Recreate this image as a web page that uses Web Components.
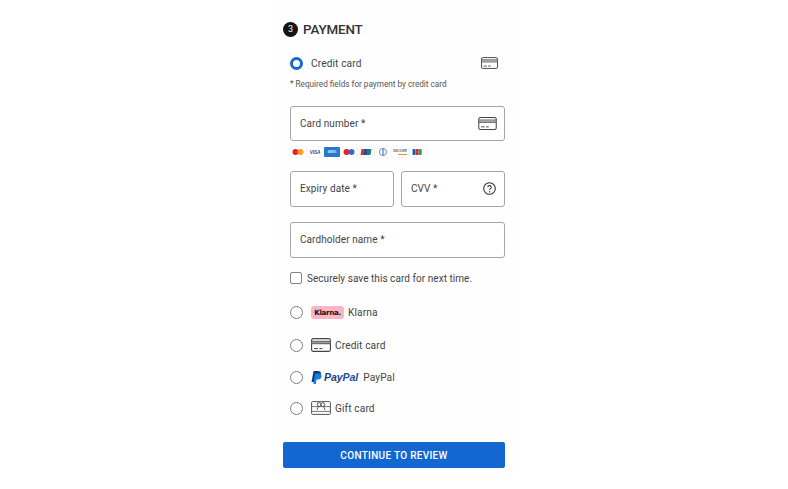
<!DOCTYPE html>
<html>
<head>
<meta charset="utf-8">
<title>Payment</title>
<style>
html, body { margin: 0; background: #fff; }
body { font-family: Roboto, "Liberation Sans", sans-serif; color: #2b2b2b; }
</style>
</head>
<body>
<checkout-payment>
    <pay-option checked style="--row-h:26px;margin-top:0">
        Credit card
        <card-icon slot="end" width="17" height="12"></card-icon>
    </pay-option>
    <p-note>* Required fields for payment by credit card</p-note>
    <text-field label="Card number *" style="margin-top:16px">
        <card-icon slot="end" width="19" height="13"></card-icon>
    </text-field>
    <brand-strip></brand-strip>
    <field-row>
        <text-field label="Expiry date *" tall></text-field>
        <text-field label="CVV *" tall>
            <help-icon slot="end"></help-icon>
        </text-field>
    </field-row>
    <text-field label="Cardholder name *" tall style="margin-top:15px"></text-field>
    <save-check>Securely save this card for next time.</save-check>
    <pay-option style="margin-top:14px;--row-h:28px"><klarna-badge slot="logo"></klarna-badge>Klarna</pay-option>
    <pay-option style="margin-top:5px;--row-h:28px"><card-icon slot="logo" width="20" height="14"></card-icon>Credit card</pay-option>
    <pay-option style="margin-top:4px;--row-h:28px"><paypal-logo slot="logo"></paypal-logo>PayPal</pay-option>
    <pay-option style="margin-top:3px;--row-h:28px"><gift-icon slot="logo"></gift-icon>Gift card</pay-option>
    <primary-button>CONTINUE TO REVIEW</primary-button>
</checkout-payment>

<script>
function shadow(el, html){
    el.attachShadow({ mode: "open" });
    el.shadowRoot.innerHTML = html;
}

class CheckoutPayment extends HTMLElement {
    constructor(){
        super();
        shadow(this, `
<style>
:host {
    display: block;
    box-sizing: border-box;
    width: 244px;
    height: 479px;
    margin: 0 auto;
    padding: 19px 11px 0 11px;
    background: #fefefe;
    border-radius: 4px;
}
.head {
    display: flex;
    align-items: center;
    gap: 5px;
    height: 20px;
    font-size: 13.4px;
    font-weight: 500;
    letter-spacing: -0.15px;
    color: #333;
}
.num {
    width: 15px;
    height: 15px;
    border-radius: 50%;
    background: #141414;
    color: #fff;
    font-size: 9px;
    font-weight: 400;
    display: flex;
    align-items: center;
    justify-content: center;
}
.body {
    padding: 11px 0 0 7px;
    width: 215px;
}
</style>
<div class="head"><span class="num">3</span><span>PAYMENT</span></div>
<div class="body"><slot></slot></div>`);
    }
}

class PayOption extends HTMLElement {
    constructor(){
        super();
        const on = this.hasAttribute("checked");
        shadow(this, `
<style>
:host {
    display: flex;
    align-items: center;
    height: var(--row-h, 28px);
    font-size: 10.2px;
    letter-spacing: 0.1px;
    color: #444;
}
.radio {
    box-sizing: border-box;
    width: 13px;
    height: 13px;
    border-radius: 50%;
    border: ${on ? "3.5px solid #1268d0" : "1px solid #7d7d7d"};
    background: #fff;
    margin-right: 8px;
    flex: none;
}
.logo {
    display: flex;
    align-items: center;
}
::slotted([slot=logo]) { margin-right: 4px; }
.end { margin-left: auto; margin-right: 7px; display: flex; }
</style>
<span class="radio"></span>
<span class="logo"><slot name="logo"></slot></span>
<span><slot></slot></span>
<span class="end"><slot name="end"></slot></span>`);
    }
}

class PNote extends HTMLElement {
    constructor(){
        super();
        shadow(this, `
<style>
:host {
    display: block;
    margin-top: 3px;
    height: 11px;
    line-height: 11px;
    font-size: 8.2px;
    color: #555;
}
</style>
<slot></slot>`);
    }
}

class TextField extends HTMLElement {
    constructor(){
        super();
        const tall = this.hasAttribute("tall");
        shadow(this, `
<style>
:host {
    display: flex;
    box-sizing: border-box;
    align-items: center;
    height: ${tall ? 36 : 35}px;
    padding: 0 7px ${tall ? 2 : 0}px 9px;
    border: 1px solid #a6a6a6;
    border-radius: 3px;
    background: #fff;
    font-size: 10px;
    letter-spacing: 0.08px;
    color: #444;
}
.end { margin-left: auto; display: flex; }
</style>
<span>${this.getAttribute("label")}</span>
<span class="end"><slot name="end"></slot></span>`);
    }
}

class FieldRow extends HTMLElement {
    constructor(){
        super();
        shadow(this, `
<style>
:host {
    display: grid;
    grid-template-columns: 104px 104px;
    gap: 7px;
    margin-top: 14px;
}
</style>
<slot></slot>`);
    }
}

class SaveCheck extends HTMLElement {
    constructor(){
        super();
        shadow(this, `
<style>
:host {
    display: flex;
    align-items: center;
    gap: 5px;
    margin-top: 14px;
    height: 12px;
    font-size: 10px;
    letter-spacing: 0.05px;
    color: #444;
}
.box {
    box-sizing: border-box;
    width: 12px;
    height: 12px;
    border: 1px solid #858585;
    border-radius: 2px;
    background: #fff;
}
</style>
<span class="box"></span><span><slot></slot></span>`);
    }
}

class CardIcon extends HTMLElement {
    constructor(){
        super();
        const w = this.getAttribute("width") || 20;
        const h = this.getAttribute("height") || 14;
        shadow(this, `
<style>:host { display: inline-flex; } svg { display: block; }</style>
<svg width="${w}" height="${h}" viewBox="0 0 20 14" fill="none" stroke="#444">
    <rect x=".6" y=".6" width="18.8" height="12.8" rx="1.6" stroke-width="1.1"/>
    <path d="M.6 3.3h18.8M.6 5.7h18.8" stroke-width="1"/>
    <path d="M.6 4.5h18.8" stroke="#999" stroke-width="1.4"/>
    <path d="M3 10.6h4M8.4 10.6h3" stroke-width="1"/>
</svg>`);
    }
}

class HelpIcon extends HTMLElement {
    constructor(){
        super();
        shadow(this, `
<style>:host { display: inline-flex; margin-right: 1px; margin-top: 1px; } svg { display: block; }</style>
<svg width="13" height="13" viewBox="0 0 13 13" fill="none" stroke="#333">
    <circle cx="6.5" cy="6.5" r="5.8" stroke-width="1.1"/>
    <path d="M4.8 5.2a1.7 1.7 0 1 1 2.7 1.4c-.6.4-1 .7-1 1.5" stroke-width="1.1"/>
    <circle cx="6.5" cy="9.7" r=".7" fill="#333" stroke="none"/>
</svg>`);
    }
}

class GiftIcon extends HTMLElement {
    constructor(){
        super();
        shadow(this, `
<style>:host { display: inline-flex; } svg { display: block; }</style>
<svg width="20" height="14" viewBox="0 0 20 14" fill="none" stroke="#555" stroke-width="1">
    <rect x=".6" y=".6" width="18.8" height="12.8" rx="1"/>
    <path d="M.6 10.4h18.8M.6 5.6h18.8" stroke-width=".8"/>
    <path d="M7.4 5.6 5.8 9M12.6 5.6 14.2 9" stroke-width=".9"/>
    <circle cx="8.2" cy="3.6" r="1.9"/>
    <circle cx="11.8" cy="3.6" r="1.9"/>
</svg>`);
    }
}

class KlarnaBadge extends HTMLElement {
    constructor(){
        super();
        shadow(this, `
<style>
:host {
    display: inline-flex;
    align-items: center;
    justify-content: center;
    box-sizing: border-box;
    width: 33px;
    height: 13px;
    border-radius: 3px;
    background: #ffb3c7;
    color: #17120f;
    font-family: "DejaVu Sans", sans-serif;
    font-size: 7.2px;
    font-weight: 700;
    letter-spacing: -0.35px;
}
</style>
Klarna.`);
    }
}

class PaypalLogo extends HTMLElement {
    constructor(){
        super();
        shadow(this, `
<style>
:host {
    display: inline-flex;
    align-items: center;
    gap: 2px;
    padding-right: 1px;
    font-family: "Liberation Sans", sans-serif;
    font-size: 10.6px;
    font-weight: 700;
    font-style: italic;
    letter-spacing: -0.1px;
    color: #253b80;
}
b { color: #1b4f9e; font-weight: 700; }
svg { display: block; }
</style>
<svg width="11" height="13" viewBox="0 0 11 13">
    <path d="M2.6 0h4.2c2.2 0 3.5 1.2 3.1 3.2-.5 2.5-2.2 3.5-4.3 3.5H4.2L3.4 11H.5z" fill="#0a3a8c"/>
    <path d="M4 2.6h4c1.9 0 2.9 1 2.6 2.9-.4 2.2-1.9 3.1-3.8 3.1H5.5L4.9 13H2.4z" fill="#1b7fd6"/>
</svg>
<span>Pay<b>Pal</b></span>`);
    }
}

class BrandStrip extends HTMLElement {
    constructor(){
        super();
        shadow(this, `
<style>
:host {
    display: flex;
    align-items: center;
    gap: 1px;
    margin-top: 6px;
    height: 10px;
}
.b {
    position: relative;
    box-sizing: border-box;
    width: 16px;
    height: 10px;
    display: flex;
    align-items: center;
    justify-content: center;
    background: #fff;
    border-radius: 1px;
    box-shadow: 0 0 0 .5px #efefef;
    overflow: hidden;
    font-family: "Liberation Sans", sans-serif;
    font-weight: 700;
}
.visa { color: #2b4f8f; font-size: 4.6px; font-style: italic; }
.amex { background: #2a78c9; color: #dcebfa; font-size: 3px; box-shadow: none; }
.disc { font-size: 2.6px; color: #555; align-items: flex-start; padding-top: 2.5px; }
.disc::after { content: ""; position: absolute; left: 6px; right: 1px; bottom: 2px; height: 1px; background: #e8893a; }
svg { display: block; }
</style>
<span class="b"><svg width="16" height="10"><circle cx="5.5" cy="5" r="3" fill="#e5202a"/><circle cx="10.5" cy="5" r="3" fill="#f79e1b"/><path d="M8 3.2a3 3 0 0 1 0 3.6 3 3 0 0 1 0-3.6z" fill="#f26522"/></svg></span>
<span class="b visa">VISA</span>
<span class="b amex">AMEX</span>
<span class="b"><svg width="16" height="10"><circle cx="5.5" cy="5" r="3" fill="#e5202a"/><circle cx="10.5" cy="5" r="3" fill="#2a6fd0"/></svg></span>
<span class="b"><svg width="16" height="10"><path d="M3.5 2H7L6 8H2.5z" fill="#d8352f"/><path d="M6.5 2H10L9 8H5.5z" fill="#1b4f8f"/><path d="M9.5 2H13.5l-1 6H8.5z" fill="#13808a"/></svg></span>
<span class="b"><svg width="16" height="10" fill="none"><circle cx="8" cy="5" r="3.6" stroke="#5a94cf" stroke-width="1"/><path d="M8 2v6" stroke="#2a5f9e" stroke-width="1"/></svg></span>
<span class="b disc">DISCOVER</span>
<span class="b"><svg width="16" height="10"><rect x="3.5" y="2" width="3" height="6" rx=".7" fill="#1d5fae"/><rect x="6.6" y="2" width="3" height="6" rx=".7" fill="#c9303e"/><rect x="9.7" y="2" width="3" height="6" rx=".7" fill="#3a9a49"/></svg></span>`);
    }
}

class PrimaryButton extends HTMLElement {
    constructor(){
        super();
        shadow(this, `
<style>
:host {
    display: flex;
    align-items: center;
    justify-content: center;
    box-sizing: border-box;
    width: 222px;
    height: 26px;
    margin: 20px 0 0 -7px;
    background: #1268d0;
    border-radius: 2px;
    color: #fff;
    font-size: 10px;
    font-weight: 500;
    letter-spacing: 0.3px;
}
</style>
<slot></slot>`);
    }
}

customElements.define("checkout-payment", CheckoutPayment);
customElements.define("pay-option", PayOption);
customElements.define("p-note", PNote);
customElements.define("text-field", TextField);
customElements.define("field-row", FieldRow);
customElements.define("save-check", SaveCheck);
customElements.define("card-icon", CardIcon);
customElements.define("help-icon", HelpIcon);
customElements.define("gift-icon", GiftIcon);
customElements.define("klarna-badge", KlarnaBadge);
customElements.define("paypal-logo", PaypalLogo);
customElements.define("brand-strip", BrandStrip);
customElements.define("primary-button", PrimaryButton);
</script>
</body>
</html>
